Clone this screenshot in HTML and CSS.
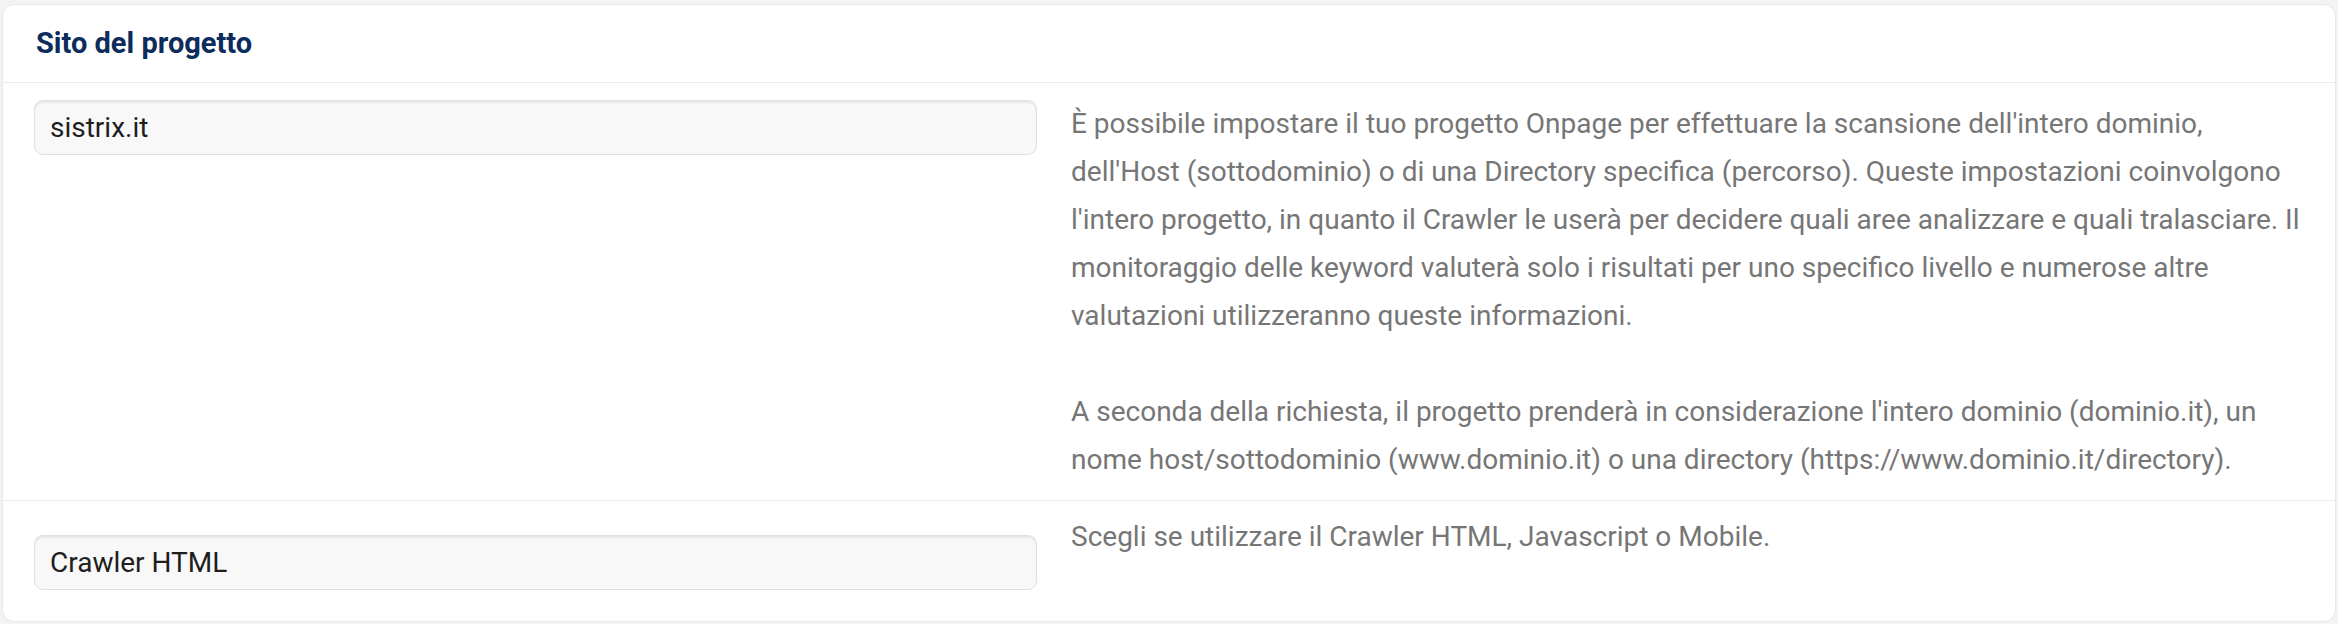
FILE: index.html
```html
<html>

<head>
    <meta charset="utf-8">
    <title>Sito del progetto</title>
    <link rel="stylesheet" href="styles.css">
</head>

<body>
    <div class="card">
        <div class="cardHead">Sito del progetto</div>

        <div class="row rowFirst">
            <div class="field">
                <input type="text" class="textbox" value="sistrix.it" readonly>
            </div>
            <div class="help">
                <p>È possibile impostare il tuo progetto Onpage per effettuare la scansione dell'intero dominio, dell'Host (sottodominio) o di una Directory specifica (percorso). Queste impostazioni coinvolgono l'intero progetto, in quanto il Crawler le userà per decidere quali aree analizzare e quali tralasciare. Il monitoraggio delle keyword valuterà solo i risultati per uno specifico livello e numerose altre valutazioni utilizzeranno queste informazioni.</p>
                <p>A seconda della richiesta, il progetto prenderà in considerazione l'intero dominio (dominio.it), un nome host/sottodominio (www.dominio.it) o una directory (https://www.dominio.it/directory).</p>
            </div>
        </div>

        <div class="row rowLast">
            <div class="field fieldLow">
                <input type="text" class="textbox" value="Crawler HTML" readonly>
            </div>
            <div class="help">
                <p>Scegli se utilizzare il Crawler HTML, Javascript o Mobile.</p>
            </div>
        </div>
    </div>
</body>

</html>
```
FILE: styles.css
```css
html {
    padding: 0;
    margin: 0;
}

body {
    margin: 0;
    padding: 4px 2px 3px 2px;
    background-color: #f3f3f3;
    font-family: Roboto, "Liberation Sans", sans-serif;
}

.card {
    background-color: #fff;
    border: 1px solid #e8e8e8;
    border-radius: 12px;
}

.cardHead {
    padding: 21px 33px 22px 33px;
    font-size: 29px;
    font-weight: bold;
    color: #0c2c5c;
    line-height: 34px;
    border-bottom: 1px solid #ebebeb;
}

.row {
    display: grid;
    grid-template-columns: 1003px 1fr;
    column-gap: 34px;
    padding: 17px 31px 16px 31px;
}

.rowFirst {
    border-bottom: 1px solid #ebebeb;
}

.rowLast {
    padding: 12px 31px 31px 31px;
}

.fieldLow {
    padding-top: 22px;
}

.textbox {
    display: block;
    width: 100%;
    height: 55px;
    box-sizing: border-box;
    margin: 0;
    padding: 0 15px;
    font-family: Roboto, "Liberation Sans", sans-serif;
    font-size: 28px;
    color: #1e1e1e;
    background-color: #f8f8f8;
    border: 1px solid #e0e0e0;
    border-radius: 9px;
    box-shadow: inset 0 2px 2px rgba(0, 0, 0, 0.07);
    outline: none;
}

.help {
    font-size: 28px;
    line-height: 48px;
    color: #767676;
}

.help p {
    margin: 0 0 48px 0;
}

.help p:last-child {
    margin-bottom: 0;
}
```
